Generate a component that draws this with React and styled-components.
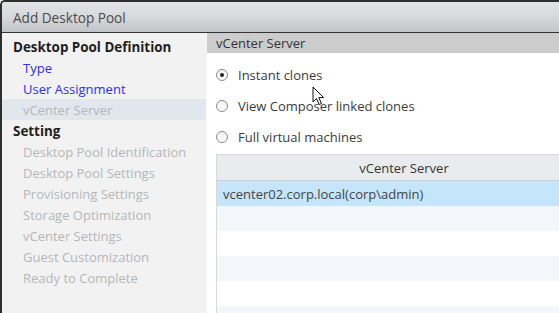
import React from "react";
import styled, { createGlobalStyle } from "styled-components";

const GlobalStyle = createGlobalStyle`
  html, body {
    margin: 0;
    padding: 0;
    background: #ffffff;
    overflow: hidden;
  }
  body {
    font-family: "Open Sans", "Noto Sans", sans-serif;
    font-size: 13px;
  }
`;

const Window = styled.div`
  position: relative;
  width: 559px;
  height: 313px;
  box-sizing: border-box;
  border-top: 2px solid #2e2e2e;
  border-left: 2px solid #2e2e2e;
  border-top-left-radius: 5px;
  display: flex;
  flex-direction: column;
  overflow: hidden;
  background: #ffffff;
`;

const TitleBar = styled.div`
  height: 30px;
  flex: none;
  display: flex;
  align-items: center;
  padding-left: 11px;
  color: #4a4a4a;
  font-size: 13.6px;
  background: linear-gradient(to bottom, #e2e3e6 0%, #d9dadd 45%, #c3c4c7 100%);
  border-bottom: 1px solid #333333;
`;

const Body = styled.div`
  flex: 1;
  display: grid;
  grid-template-columns: 204px 1fr;
  min-height: 0;
`;

const Sidebar = styled.nav`
  background: #f2f2f2;
  padding-top: 3px;
  display: flex;
  flex-direction: column;
`;

const NavItem = styled.div`
  height: 21px;
  display: flex;
  align-items: center;
  margin-left: -2px;
  padding-left: ${(p) => (p.$heading ? 13 : 23)}px;
  font-weight: ${(p) => (p.$heading ? 700 : 400)};
  font-size: ${(p) => (p.$heading ? 13.4 : 13)}px;
  color: ${(p) =>
    p.$heading ? "#1e1e1e" : p.$link ? "#2f2ff0" : "#b4b7b9"};
  background: ${(p) => (p.$active ? "#e2e6ed" : "transparent")};
  white-space: nowrap;
`;

const Main = styled.section`
  display: flex;
  flex-direction: column;
  overflow: hidden;
  border-left: 1px solid #f8f8f8;
`;

const SectionHeader = styled.div`
  height: 20px;
  flex: none;
  display: flex;
  align-items: center;
  padding-left: 9px;
  background: #cccccc;
  color: #333333;
`;

const Options = styled.div`
  display: flex;
  flex-direction: column;
  padding: 6px 0 0 9px;
`;

const RadioRow = styled.label`
  height: 31px;
  display: flex;
  align-items: center;
  gap: 10px;
  color: #3c3c3c;
  white-space: nowrap;
`;

const RadioCircle = styled.span`
  width: 12px;
  height: 12px;
  box-sizing: border-box;
  border-radius: 50%;
  border: 1px solid #8a8a8a;
  background: linear-gradient(to bottom, #f2f2f2, #ffffff);
  display: flex;
  align-items: center;
  justify-content: center;
  flex: none;

  &::after {
    content: "";
    width: 4px;
    height: 4px;
    border-radius: 50%;
    background: ${(p) => (p.$checked ? "#222222" : "transparent")};
  }
`;

const Table = styled.div`
  margin: 2px 0 0 9px;
  width: 374px;
  border-top: 1px solid #d8d8d8;
  border-left: 1px solid #d8d8d8;
  flex: none;
`;

const HeaderCell = styled.div`
  height: 25px;
  display: flex;
  align-items: center;
  justify-content: center;
  background: #e9ecef;
  border-bottom: 1px solid #cfcfcf;
  color: #333333;
`;

const Row = styled.div`
  height: 25px;
  display: flex;
  align-items: center;
  padding-left: 6px;
  color: #444444;
  background: ${(p) =>
    p.$selected ? "#c5e5fb" : p.$odd ? "#f3f6fa" : "#ffffff"};
`;

const Cursor = styled.svg`
  position: absolute;
  left: 310px;
  top: 84px;
  pointer-events: none;
`;

const steps = [
  { label: "Desktop Pool Definition", heading: true },
  { label: "Type", link: true },
  { label: "User Assignment", link: true },
  { label: "vCenter Server", active: true },
  { label: "Setting", heading: true },
  { label: "Desktop Pool Identification" },
  { label: "Desktop Pool Settings" },
  { label: "Provisioning Settings" },
  { label: "Storage Optimization" },
  { label: "vCenter Settings" },
  { label: "Guest Customization" },
  { label: "Ready to Complete" },
];

const options = [
  { label: "Instant clones", checked: true },
  { label: "View Composer linked clones" },
  { label: "Full virtual machines" },
];

const rows = ["vcenter02.corp.local(corp\\admin)", "", "", "", "", ""];

const App = () => {
  return (
    <>
      <GlobalStyle />
      <Window>
        <TitleBar>Add Desktop Pool</TitleBar>
        <Body>
          <Sidebar>
            {steps.map((s) => (
              <NavItem
                key={s.label}
                $heading={s.heading}
                $link={s.link}
                $active={s.active}
              >
                {s.label}
              </NavItem>
            ))}
          </Sidebar>
          <Main>
            <SectionHeader>vCenter Server</SectionHeader>
            <Options>
              {options.map((o) => (
                <RadioRow key={o.label}>
                  <RadioCircle $checked={o.checked} />
                  {o.label}
                </RadioRow>
              ))}
            </Options>
            <Table>
              <HeaderCell>vCenter Server</HeaderCell>
              {rows.map((r, i) => (
                <Row key={i} $selected={i === 0} $odd={i % 2 === 1}>
                  {r}
                </Row>
              ))}
            </Table>
          </Main>
        </Body>
        <Cursor width="14" height="20" viewBox="0 0 14 20">
          <path
            d="M1 1 L1 16 L4.5 12.5 L7.2 18.5 L9.4 17.5 L6.8 11.6 L11.6 11.6 Z"
            fill="#ffffff"
            stroke="#111111"
            strokeWidth="1"
            strokeLinejoin="round"
          />
        </Cursor>
      </Window>
    </>
  );
};

export default App;
